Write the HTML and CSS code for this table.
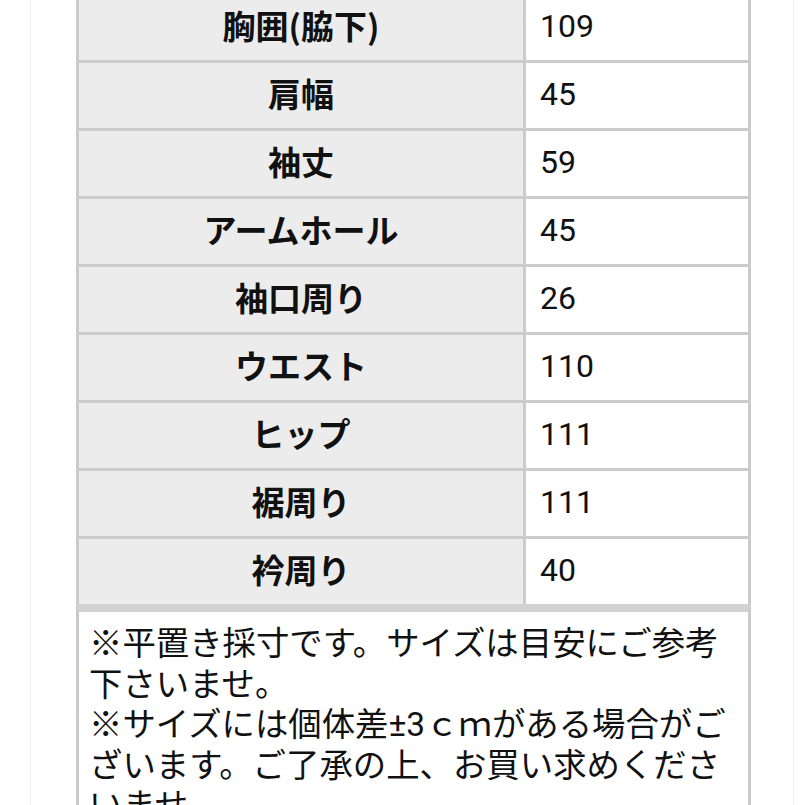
FILE: index.html
```html
<!DOCTYPE html>
<html lang="ja">
<head>
<meta charset="utf-8">
<link rel="stylesheet" href="styles.css">
</head>
<body>
<div class="page">
  <div class="sizes">
    <div class="label">胸囲(脇下)</div><div class="value">109</div>
    <div class="label">肩幅</div><div class="value">45</div>
    <div class="label">袖丈</div><div class="value">59</div>
    <div class="label">アームホール</div><div class="value">45</div>
    <div class="label">袖口周り</div><div class="value">26</div>
    <div class="label">ウエスト</div><div class="value">110</div>
    <div class="label">ヒップ</div><div class="value">111</div>
    <div class="label">裾周り</div><div class="value">111</div>
    <div class="label">衿周り</div><div class="value">40</div>
  </div>
  <div class="note">
    <p>※平置き採寸です。サイズは目安にご参考<br>下さいませ。<br>※サイズには個体差±3ｃｍがある場合がご<br>ざいます。ご了承の上、お買い求めくださ<br>いませ。</p>
  </div>
</div>
</body>
</html>
```
FILE: styles.css
```css
html, body {
  margin: 0;
  padding: 0;
  background: #ffffff;
}
body {
  width: 805px;
  height: 805px;
  overflow: hidden;
}
.page {
  margin-left: 30px;
  width: 764px;
  min-height: 900px;
  border-left: 1px solid #f1f1f1;
  border-right: 1px solid #f1f1f1;
  padding: 0 43px 0 45px;
  box-sizing: border-box;
}
.sizes {
  margin-top: -5px;
  display: grid;
  grid-template-columns: 444px 222px;
  grid-auto-rows: 65px;
  gap: 3px;
  background: #cbcbcb;
  padding: 0 3px;
  width: 675px;
  box-sizing: border-box;
}
.label {
  background: #ececec;
  display: flex;
  align-items: center;
  justify-content: center;
  font-family: "Noto Sans CJK JP", sans-serif;
  font-weight: 600;
  font-size: 33px;
  color: #111;
  padding-bottom: 6px;
  box-sizing: border-box;
}
.value {
  background: #ffffff;
  display: flex;
  align-items: center;
  padding-left: 14px;
  font-family: Roboto, "Noto Sans CJK JP", sans-serif;
  font-size: 32px;
  color: #111;
  padding-bottom: 4px;
  box-sizing: border-box;
}
.note {
  width: 675px;
  box-sizing: border-box;
  border-top: 8px solid #d2d2d2;
  border-left: 3px solid #cbcbcb;
  border-right: 3px solid #cbcbcb;
  background: #fff;
  padding: 12px 0 0 10px;
}
.note p {
  margin: 0;
  font-family: Roboto, "Noto Sans CJK JP", sans-serif;
  font-size: 33.4px;
  line-height: 40.5px;
  color: #111;
  white-space: nowrap;
}
```
